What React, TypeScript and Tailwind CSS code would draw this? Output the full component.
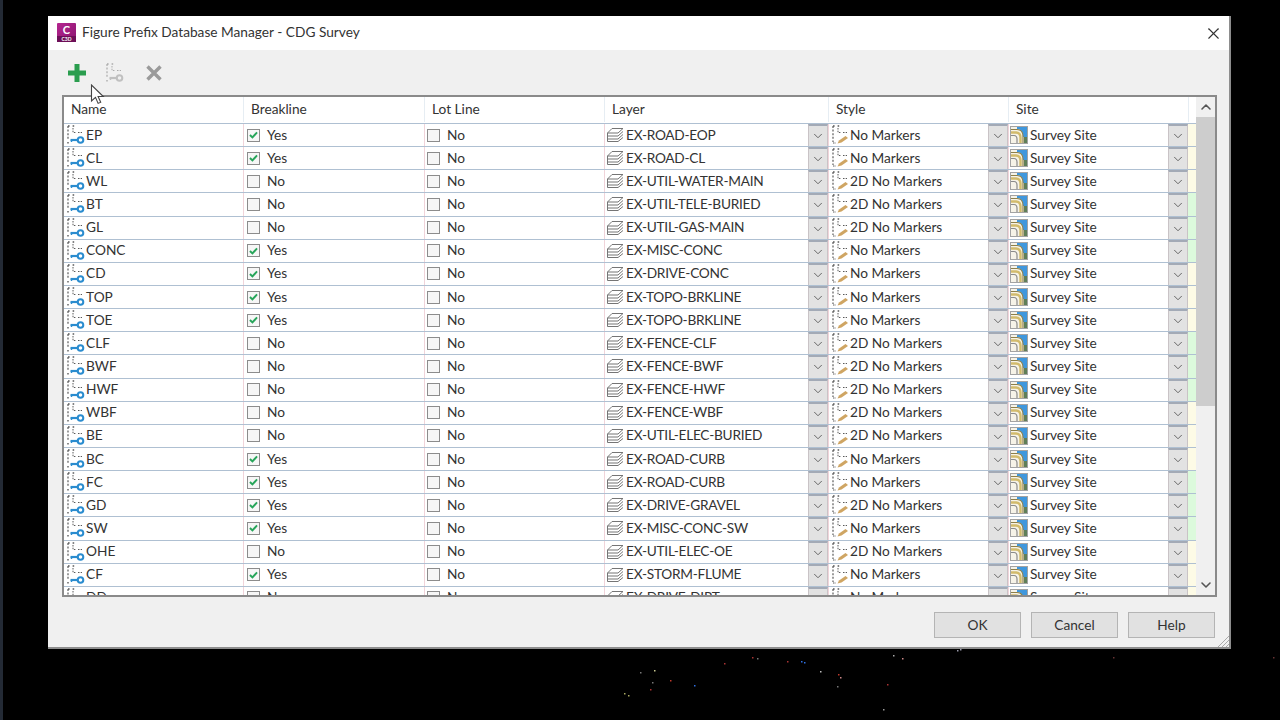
import { X, ChevronDown, ChevronUp } from "lucide-react";

type Row = {
  name: string;
  breakline: boolean;
  layer: string;
  style: string;
};

const rows: Row[] = [
  { name: "EP", breakline: true, layer: "EX-ROAD-EOP", style: "No Markers" },
  { name: "CL", breakline: true, layer: "EX-ROAD-CL", style: "No Markers" },
  { name: "WL", breakline: false, layer: "EX-UTIL-WATER-MAIN", style: "2D No Markers" },
  { name: "BT", breakline: false, layer: "EX-UTIL-TELE-BURIED", style: "2D No Markers" },
  { name: "GL", breakline: false, layer: "EX-UTIL-GAS-MAIN", style: "2D No Markers" },
  { name: "CONC", breakline: true, layer: "EX-MISC-CONC", style: "No Markers" },
  { name: "CD", breakline: true, layer: "EX-DRIVE-CONC", style: "No Markers" },
  { name: "TOP", breakline: true, layer: "EX-TOPO-BRKLINE", style: "No Markers" },
  { name: "TOE", breakline: true, layer: "EX-TOPO-BRKLINE", style: "No Markers" },
  { name: "CLF", breakline: false, layer: "EX-FENCE-CLF", style: "2D No Markers" },
  { name: "BWF", breakline: false, layer: "EX-FENCE-BWF", style: "2D No Markers" },
  { name: "HWF", breakline: false, layer: "EX-FENCE-HWF", style: "2D No Markers" },
  { name: "WBF", breakline: false, layer: "EX-FENCE-WBF", style: "2D No Markers" },
  { name: "BE", breakline: false, layer: "EX-UTIL-ELEC-BURIED", style: "2D No Markers" },
  { name: "BC", breakline: true, layer: "EX-ROAD-CURB", style: "No Markers" },
  { name: "FC", breakline: true, layer: "EX-ROAD-CURB", style: "No Markers" },
  { name: "GD", breakline: true, layer: "EX-DRIVE-GRAVEL", style: "2D No Markers" },
  { name: "SW", breakline: true, layer: "EX-MISC-CONC-SW", style: "No Markers" },
  { name: "OHE", breakline: false, layer: "EX-UTIL-ELEC-OE", style: "2D No Markers" },
  { name: "CF", breakline: true, layer: "EX-STORM-FLUME", style: "No Markers" },
  { name: "DD", breakline: false, layer: "EX-DRIVE-DIRT", style: "No Markers" },
];

const specks = [
  [624, 693, "#a8a860"], [628, 695, "#a8a860"], [640, 672, "#777"], [654, 670, "#c8c890"],
  [652, 682, "#777"], [670, 680, "#c0392b"], [694, 685, "#2f6fe0"], [650, 689, "#a33"],
  [724, 663, "#a33"], [752, 657, "#a33"], [757, 658, "#777"], [787, 661, "#a33"],
  [801, 661, "#2f6fe0"], [804, 662, "#2f6fe0"], [820, 671, "#bbb"], [838, 674, "#c0392b"],
  [840, 677, "#c88"], [837, 686, "#777"], [887, 684, "#a33"], [883, 709, "#999"],
  [957, 650, "#99a"], [960, 649, "#99a"], [893, 655, "#aaa"], [902, 658, "#c88"],
  [1113, 657, "#633"], [1273, 657, "#633"],
];

const FigureKeyIcon = ({ gray = false }: { gray?: boolean }) => {
  const key = gray ? "#c0c0c0" : "#2a8ccf";
  const dots = gray ? "#ababab" : "#5a5a5a";
  return (
    <svg width="20" height="22" viewBox="0 0 20 22" className="shrink-0">
      <path d="M3 2v13" stroke={dots} strokeWidth="1.2" strokeDasharray="2 1.6" fill="none" />
      <path d="M3 2h7" stroke={dots} strokeWidth="1.3" strokeDasharray="1.6 3" fill="none" />
      <path d="M8 4v4.500h2.500M13 8.500h4" stroke={dots} strokeWidth="1" strokeDasharray="1.5 1.2" fill="none" />
      <path d="M5.500 16h8" stroke={key} strokeWidth="2.2" />
      <path d="M6.500 16v2" stroke={key} strokeWidth="1.4" />
      <circle cx="15.5" cy="16" r="2.8" fill="none" stroke={key} strokeWidth="2" />
      <path d="M3 18v1.400" stroke={dots} strokeWidth="1.4" />
    </svg>
  );
};

const LayerIcon = () => (
  <svg width="18" height="18" viewBox="0 0 18 18" fill="none" stroke="#757575" strokeWidth="1" className="shrink-0">
    <path d="M1.500 7 6 2.500H17L12 7Z" />
    <path d="M1.500 7v3h10.500L17 5.500" />
    <path d="M1.500 10v3h10.500L17 8.500" />
    <path d="M1.500 13v2.500h10.500L17 11.500" />
  </svg>
);

const StyleIcon = () => (
  <svg width="20" height="22" viewBox="0 0 20 22" fill="none" className="shrink-0">
    <path d="M3 2v16" stroke="#5a5a5a" strokeWidth="1.2" strokeDasharray="2 1.6" />
    <path d="M3 2h7" stroke="#5a5a5a" strokeWidth="1.3" strokeDasharray="1.6 3" />
    <path d="M8 4v4.500h3M13 8.500h4" stroke="#5a5a5a" strokeWidth="1" strokeDasharray="1.5 1.2" />
    <path d="M3 19h3" stroke="#5a5a5a" strokeWidth="1.2" strokeDasharray="1.5 1" />
    <path d="M7.500 19.500 9 16.500l6.500-4.500 2.500 2-6.500 4.500Z" fill="#cfa563" />
  </svg>
);

const SiteIcon = () => (
  <svg width="18" height="18" viewBox="0 0 18 18" className="shrink-0">
    <rect x="0.5" y="0.5" width="17" height="17" fill="#f6f3e8" stroke="#a3a3a3" />
    <path d="M7 1h10v10h-4C13 6 11 3 7 3Z" fill="#3f97dd" />
    <path d="M1 3.500h6c4 0 6 3 6 7V17" fill="none" stroke="#8d7f49" strokeWidth="1.2" />
    <path d="M1 6.500h5c3 0 4.500 2 4.500 5V17" fill="none" stroke="#d2bb6c" strokeWidth="2.4" />
    <path d="M1 9.500h3c2 0 3 1.500 3 3.500V17" fill="none" stroke="#8a8a8a" strokeWidth="1.2" />
    <rect x="14" y="11" width="3" height="6" fill="#5f7f58" />
  </svg>
);

const CheckBox = ({ checked }: { checked: boolean }) => (
  <span className="flex h-[13px] w-[13px] shrink-0 items-center justify-center border border-[#8c8c8c] bg-[#f6f6f6]">
    {checked && (
      <svg width="9" height="8" viewBox="0 0 10 9" fill="none">
        <path d="M1 4.500 3.800 7.200 9 1.500" stroke="#27a55a" strokeWidth="2.2" />
      </svg>
    )}
  </span>
);

const DropButton = () => (
  <span className="flex h-full w-[20px] shrink-0 items-center justify-center border-x border-t-2 border-x-[#c9c3c6] border-t-[#a3aab6] bg-[#e2e2e2]">
    <ChevronDown size={14} strokeWidth={1.5} className="text-[#555]" />
  </span>
);

const TableRow = ({ row, index }: { row: Row; index: number }) => {
  const green = Math.floor(index / 3) % 2 === 1;
  return (
    <div className="grid h-[23.15px] shrink-0 grid-cols-[179px_181px_180px_224px_180px_180px_8px] border-b border-[#afc0d2] text-[13.7px] text-[#333]">
      <div className="flex items-center gap-px overflow-hidden pl-[1px]">
        <FigureKeyIcon />
        <span className="mb-[0.5px]">{row.name}</span>
      </div>
      <div className="flex items-center gap-[7px] border-l border-[#f0d4da] pl-[3px]">
        <CheckBox checked={row.breakline} />
        <span className="mb-[0.5px]">{row.breakline ? "Yes" : "No"}</span>
      </div>
      <div className="flex items-center gap-[7px] border-l border-[#f0d4da] pl-[2px]">
        <CheckBox checked={false} />
        <span className="mb-[0.5px]">No</span>
      </div>
      <div className="flex items-center border-l border-[#f0d4da] pl-[1px]">
        <LayerIcon />
        <span className="mb-[0.5px] ml-[2px] flex-1 overflow-hidden whitespace-nowrap tracking-[-0.27px]">{row.layer}</span>
        <DropButton />
      </div>
      <div className="flex items-center border-l border-[#f0d4da] pl-px">
        <StyleIcon />
        <span className="mb-[0.5px] flex-1 whitespace-nowrap">{row.style}</span>
        <DropButton />
      </div>
      <div className="flex items-center border-l border-[#f0d4da] pl-px">
        <SiteIcon />
        <span className="mb-[0.5px] ml-[2px] flex-1 whitespace-nowrap">Survey Site</span>
        <DropButton />
      </div>
      <div className={green ? "bg-[#dcfadc]" : "bg-[#fdfbe6]"} />
    </div>
  );
};

const FooterButton = ({ label }: { label: string }) => (
  <button className="h-[26px] w-[87px] border border-[#b4b4b4] bg-[#e1e1e1] text-[13.7px] text-[#333]">
    {label}
  </button>
);

export default function App() {
  return (
    <div className="relative h-[720px] w-[1280px] overflow-hidden bg-black pl-[48px] pt-[16px] font-['Lato',sans-serif]">
      <div className="absolute bottom-0 left-0 top-0 w-[3px] bg-[#232a35]" />

      <div className="relative flex h-[633px] w-[1183px] flex-col border-b-2 border-r-2 border-[#8d8d8d] bg-[#f0f0f0]">
        {/* title bar */}
        <div className="flex h-[34px] shrink-0 items-center bg-white pl-[9px] pr-[6px]">
          <div className="mb-[1px] flex h-[19px] w-[19px] flex-col items-center rounded-[1px] bg-gradient-to-br from-[#b5248f] to-[#8a1670] leading-none text-white">
            <span className="text-[11px] font-bold leading-[13px]">C</span>
            <span className="w-full bg-[#6d0f58] text-center text-[5px] font-bold leading-[6px]">C3D</span>
          </div>
          <span className="mb-[1px] ml-[6px] text-[13.7px] text-[#333]">Figure Prefix Database Manager - CDG Survey</span>
          <X size={19} strokeWidth={1.4} className="ml-auto text-[#333]" />
        </div>

        {/* toolbar */}
        <div className="flex h-[45px] shrink-0 items-center gap-[17px] pl-[19px]">
          <svg width="20" height="20" viewBox="0 0 20 20">
            <path d="M7.500 1h5v6.500H19v5h-6.500V19h-5v-6.500H1v-5h6.500Z" fill="#2a9d4e" />
          </svg>
          <FigureKeyIcon gray />
          <svg width="18" height="18" viewBox="0 0 18 18" className="ml-[4px]">
            <path d="M2.500 2.500l13 13M15.500 2.500l-13 13" stroke="#9a9a9a" strokeWidth="3.4" />
          </svg>
        </div>

        {/* table */}
        <div className="mx-[14px] flex h-[502px] w-[1155px] shrink-0 border-2 border-[#8a8a8a] bg-white">
          <div className="flex h-full w-[1132px] flex-col overflow-hidden">
            <div className="grid h-[27px] shrink-0 grid-cols-[179px_181px_180px_224px_180px_180px_8px] border-b border-[#afc0d2] pb-[1px] text-[13.7px] text-[#333]">
              {["Name", "Breakline", "Lot Line", "Layer", "Style", "Site"].map((h, i) => (
                <div key={h} className={i === 0 ? "flex items-center pl-[7px]" : "flex items-center border-l border-[#e6edf3] pl-[7px]"}>
                  {h}
                </div>
              ))}
              <div className="border-l border-[#e6edf3]" />
            </div>
            {rows.map((row, i) => (
              <TableRow key={row.name} row={row} index={i} />
            ))}
          </div>
          <div className="flex h-full w-[19px] flex-col items-center bg-[#f0f0f0]">
            <ChevronUp size={16} strokeWidth={2.4} className="my-[2px] text-[#555]" />
            <div className="h-[289px] w-full bg-[#cdcdcd]" />
            <ChevronDown size={16} strokeWidth={2.4} className="mb-[2px] mt-auto text-[#555]" />
          </div>
        </div>

        {/* footer */}
        <div className="mr-[14px] mt-[15px] flex justify-end gap-[10px]">
          <FooterButton label="OK" />
          <FooterButton label="Cancel" />
          <FooterButton label="Help" />
        </div>

        {/* resize grip */}
        <svg width="12" height="12" viewBox="0 0 12 12" className="absolute bottom-0 right-0" stroke="#a9a9a9">
          <path d="M12 1 1 12M12 5l-7 7M12 9l-3 3" />
        </svg>
      </div>

      {/* mouse pointer */}
      <svg width="16" height="22" viewBox="0 0 16 22" className="absolute left-[90px] top-[84px]">
        <path d="M1.500 1v16l4-3.600 2.600 6 2.600-1.100-2.600-5.800h5.200Z" fill="#fff" stroke="#444" strokeWidth="1.1" />
      </svg>

      {/* screen noise below the dialog */}
      <svg width="1280" height="720" className="pointer-events-none absolute left-0 top-0">
        {specks.map(([x, y, c], i) => (
          <rect key={i} x={x as number} y={y as number} width="1.5" height="1.5" fill={c as string} />
        ))}
      </svg>
    </div>
  );
}
